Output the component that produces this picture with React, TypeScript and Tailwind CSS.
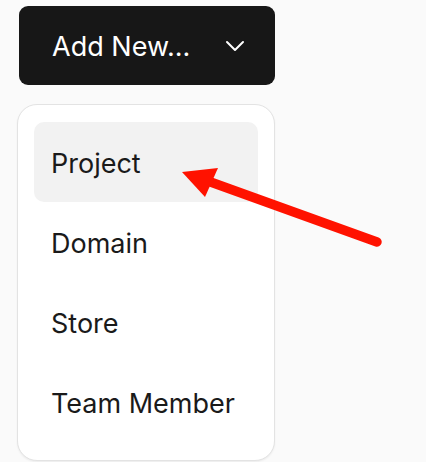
const items = ["Project", "Domain", "Store", "Team Member"]

const App = () => {
  return (
    <div
      className="relative w-[426px] h-[462px] overflow-hidden bg-[#fafafa]"
      style={{ fontFamily: "Inter, 'Noto Sans', sans-serif" }}
    >
      <div className="flex flex-col items-start pt-[6px] pl-[17px]">
        {/* Trigger */}
        <button
          type="button"
          className="ml-[2px] flex items-center justify-between w-[256px] h-[79px] pl-[33px] pr-[30px] rounded-[9px] bg-[#171717] text-white text-[27px] leading-none"
        >
          <span className="pt-[2px]">Add New...</span>
          <svg width="20" height="12" viewBox="0 0 20 12" fill="none">
            <path d="M2 2l8 8 8-8" stroke="white" strokeWidth="2" strokeLinecap="round" strokeLinejoin="round" />
          </svg>
        </button>

        {/* Menu */}
        <div className="mt-[19px] w-[258px] rounded-[20px] border border-[#e3e3e3] bg-white px-[16px] pt-[17px] pb-[18px] shadow-[0_1px_2px_rgba(0,0,0,0.06)]">
          {items.map((item, i) => (
            <div
              key={item}
              className={`flex items-center h-[80px] px-[17px] pt-[2px] rounded-[10px] text-[27px] leading-none text-[#1a1a1a] ${
                i === 0 ? "bg-[#f2f2f2]" : ""
              }`}
            >
              {item}
            </div>
          ))}
        </div>
      </div>

      {/* Annotation arrow */}
      <svg className="absolute left-0 top-0 pointer-events-none" width="426" height="462">
        <line x1="377" y1="242" x2="205" y2="180" stroke="#ff1200" strokeWidth="9.5" strokeLinecap="round" />
        <polygon points="182,172 218,168 205,197" fill="#ff1200" />
      </svg>
    </div>
  )
}

export default App
